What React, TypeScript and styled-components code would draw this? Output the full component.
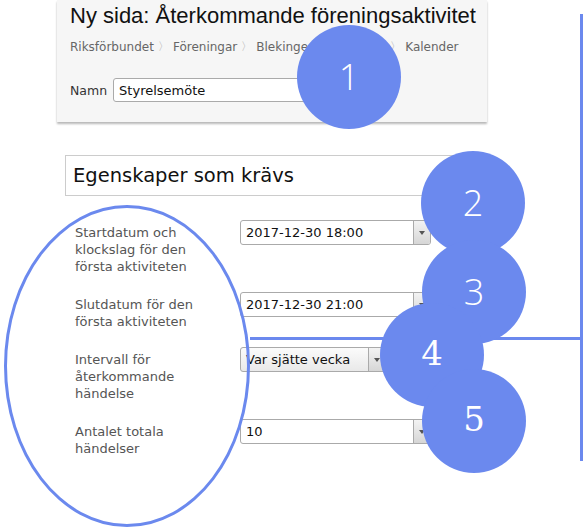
import React from 'react';
import styled, { createGlobalStyle } from 'styled-components';

const GlobalStyle = createGlobalStyle`
  html, body {
    margin: 0;
    padding: 0;
    background: #ffffff;
  }
  body {
    font-family: "DejaVu Sans", Verdana, sans-serif;
  }
`;

const MARK = '#6b89ee';

const Page = styled.div`
  position: relative;
  width: 587px;
  height: 532px;
  overflow: hidden;
  background: #ffffff;
  padding-left: 57px;
  box-sizing: border-box;
`;

const Header = styled.header`
  width: 430px;
  height: 122px;
  box-sizing: border-box;
  padding: 3px 13px 0;
  background: #f6f6f6;
  box-shadow: 0 2px 2px rgba(0, 0, 0, 0.28);
`;

const PageTitle = styled.h1`
  margin: 0;
  font-family: "Liberation Sans", Arial, sans-serif;
  font-weight: 400;
  font-size: 22px;
  line-height: 26px;
  color: #111;
  white-space: nowrap;
`;

const Crumbs = styled.nav`
  margin-top: 10px;
  display: flex;
  align-items: center;
  gap: 4px;
  font-size: 12px;
  line-height: 16px;
  color: #666;
  white-space: nowrap;
`;

const Sep = styled.span`
  color: #aaa;
  font-size: 11px;
`;

const NameRow = styled.div`
  margin-top: 23px;
  display: flex;
  align-items: center;
  gap: 6px;
  font-size: 12.5px;
  color: #333;
`;

const TextBox = styled.div`
  width: 210px;
  height: 24px;
  box-sizing: border-box;
  border: 1px solid #aaa;
  border-radius: 3px;
  background: #fff;
  padding-left: 5px;
  display: flex;
  align-items: center;
  font-size: 13px;
  color: #111;
`;

const SectionTitle = styled.h2`
  margin: 33px 0 0 8px;
  width: 422px;
  height: 41px;
  box-sizing: border-box;
  border: 1px solid #ccc;
  padding-left: 7px;
  display: flex;
  align-items: center;
  font-weight: 400;
  font-size: 19.5px;
  color: #111;
`;

const Form = styled.div`
  margin-top: 24px;
  padding-left: 18px;
  display: grid;
  grid-template-columns: 165px 1fr;
  row-gap: 17px;
`;

const Label = styled.div`
  padding-top: 4px;
  font-size: 13px;
  line-height: 17px;
  color: #555;
`;

const Field = styled.div<{ $w: number; $shaded?: boolean }>`
  width: ${(p) => p.$w}px;
  height: 25px;
  box-sizing: border-box;
  border: 1px solid #aaa;
  border-radius: 3px;
  display: flex;
  align-items: stretch;
  overflow: hidden;
  background: ${(p) => (p.$shaded ? 'linear-gradient(#fbfbfb, #e9e9e9)' : '#fff')};
`;

const FieldText = styled.span`
  flex: 1;
  display: flex;
  align-items: center;
  padding-left: 5px;
  font-size: 13px;
  color: #111;
  white-space: nowrap;
`;

const Arrow = styled.span`
  width: 16px;
  border-left: 1px solid #aaa;
  background: linear-gradient(#f3f3f3, #d6d6d6);
  display: flex;
  align-items: center;
  justify-content: center;
  &::after {
    content: '';
    border-left: 3px solid transparent;
    border-right: 3px solid transparent;
    border-top: 4px solid #555;
  }
`;

const Ellipse = styled.div`
  position: absolute;
  left: 4px;
  top: 205px;
  width: 246px;
  height: 322px;
  box-sizing: border-box;
  border: 3px solid ${MARK};
  border-radius: 50%;
`;

const VLine = styled.div`
  position: absolute;
  left: 580px;
  top: 14px;
  width: 3px;
  height: 447px;
  background: ${MARK};
`;

const HLine = styled.div`
  position: absolute;
  left: 250px;
  top: 337px;
  width: 333px;
  height: 3px;
  background: ${MARK};
`;

const Badge = styled.div`
  position: absolute;
  width: 104px;
  height: 104px;
  margin: -52px 0 0 -52px;
  border-radius: 50%;
  background: ${MARK};
  color: #fff;
  display: flex;
  align-items: center;
  justify-content: center;
`;

const SansNum = styled.span`
  font-family: "Open Sans", "Noto Sans", sans-serif;
  font-weight: 300;
  font-size: 36px;
  line-height: 1;
`;

const SerifNum = styled.span`
  font-family: "DejaVu Serif", "Liberation Serif", serif;
  font-weight: 400;
  font-size: 34px;
  line-height: 1;
  transform: translateY(-2px);
`;

const rows = [
  { label: ['Startdatum och', 'klockslag för den', 'första aktiviteten'], value: '2017-12-30 18:00', w: 191 },
  { label: ['Slutdatum för den', 'första aktiviteten'], value: '2017-12-30 21:00', w: 191 },
  { label: ['Intervall för', 'återkommande', 'händelse'], value: 'Var sjätte vecka', w: 146, shaded: true },
  { label: ['Antalet totala', 'händelser'], value: '10', w: 191 },
];

const badges = [
  { n: '1', x: 349, y: 77 },
  { n: '2', x: 473, y: 203 },
  { n: '3', x: 474, y: 292 },
  { n: '4', x: 432, y: 355, serif: true },
  { n: '5', x: 474, y: 421, serif: true },
];

export default function App() {
  return (
    <>
      <GlobalStyle />
      <Page>
        <Header>
          <PageTitle>Ny sida: Återkommande föreningsaktivitet</PageTitle>
          <Crumbs>
            <span>Riksförbundet</span>
            <Sep>〉</Sep>
            <span>Föreningar</span>
            <Sep>〉</Sep>
            <span>Blekinge länsförening</span>
            <Sep>〉</Sep>
            <span>Kalender</span>
          </Crumbs>
          <NameRow>
            <span>Namn</span>
            <TextBox>Styrelsemöte</TextBox>
          </NameRow>
        </Header>

        <SectionTitle>Egenskaper som krävs</SectionTitle>

        <Form>
          {rows.map((r) => (
            <React.Fragment key={r.value}>
              <Label>
                {r.label.map((l) => (
                  <div key={l}>{l}</div>
                ))}
              </Label>
              <div>
                <Field $w={r.w} $shaded={r.shaded}>
                  <FieldText>{r.value}</FieldText>
                  <Arrow />
                </Field>
              </div>
            </React.Fragment>
          ))}
        </Form>

        <Ellipse />
        <HLine />
        <VLine />
        {badges.map((b) => (
          <Badge key={b.n} style={{ left: b.x, top: b.y }}>
            {b.serif ? <SerifNum>{b.n}</SerifNum> : <SansNum>{b.n}</SansNum>}
          </Badge>
        ))}
      </Page>
    </>
  );
}
